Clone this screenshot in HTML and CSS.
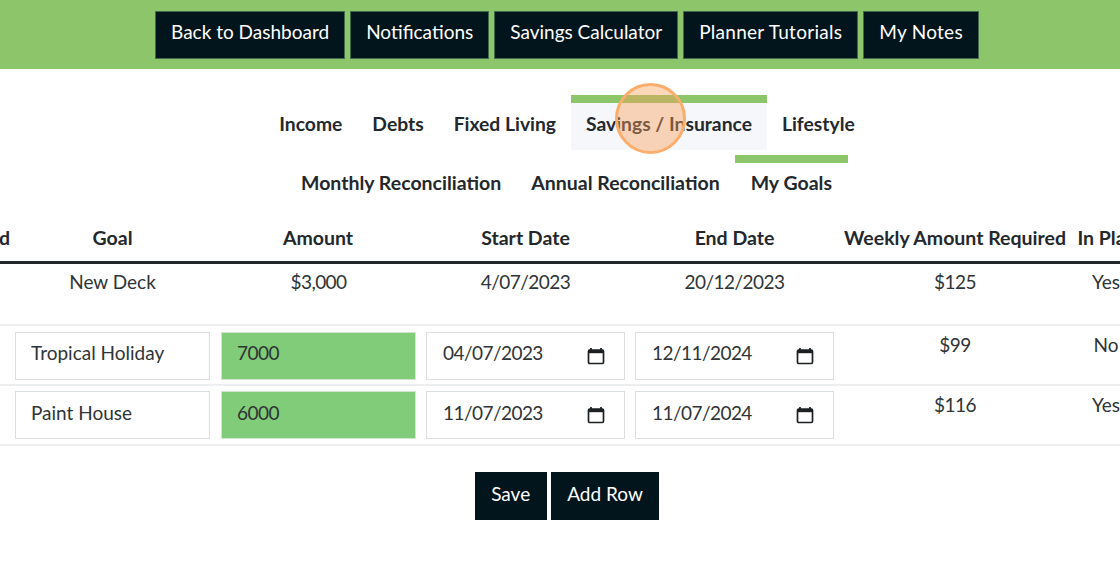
FILE: index.html
```html
<!DOCTYPE html>
<html lang="en">
<head>
<meta charset="utf-8">
<title>My Goals</title>
<link rel="stylesheet" href="styles.css">
</head>
<body>
<div class="page">
  <header class="topbar">
    <a class="btn">Back to Dashboard</a>
    <a class="btn">Notifications</a>
    <a class="btn">Savings Calculator</a>
    <a class="btn wide">Planner Tutorials</a>
    <a class="btn wide">My Notes</a>
  </header>
  <nav class="tabs">
    <div class="tab-row first">
      <a class="tab">Income</a>
      <a class="tab">Debts</a>
      <a class="tab">Fixed Living</a>
      <a class="tab active shaded">Savings / Insurance</a>
      <a class="tab">Lifestyle</a>
    </div>
    <div class="tab-row">
      <a class="tab">Monthly Reconciliation</a>
      <a class="tab">Annual Reconciliation</a>
      <a class="tab active">My Goals</a>
    </div>
  </nav>
  <div class="table-clip">
    <table class="goals">
      <colgroup>
        <col class="c-prev"><col class="c-goal"><col class="c-amount"><col class="c-start"><col class="c-end"><col class="c-weekly"><col class="c-plan">
      </colgroup>
      <thead>
        <tr>
          <th>Saved</th><th>Goal</th><th>Amount</th><th>Start Date</th><th>End Date</th><th>Weekly Amount Required</th><th>In Plan</th>
        </tr>
      </thead>
      <tbody>
        <tr class="static">
          <td></td><td>New Deck</td><td class="num">$3,000</td><td class="num">4/07/2023</td><td class="num">20/12/2023</td><td class="num">$125</td><td>Yes</td>
        </tr>
        <tr class="first-input">
          <td></td>
          <td><input class="field" type="text" value="Tropical Holiday"></td>
          <td><input class="field green num" type="text" value="7000"></td>
          <td><label class="date"><input class="num" type="text" value="04/07/2023"><svg class="cal" viewBox="0 0 18 18"><path d="M4 1v2M14 1v2"/><rect x="1.5" y="3" width="15" height="13.5" rx="1.2"/><path class="fill" d="M1.5 3h15v3.2h-15z"/></svg></label></td>
          <td><label class="date"><input class="num" type="text" value="12/11/2024"><svg class="cal" viewBox="0 0 18 18"><path d="M4 1v2M14 1v2"/><rect x="1.5" y="3" width="15" height="13.5" rx="1.2"/><path class="fill" d="M1.5 3h15v3.2h-15z"/></svg></label></td>
          <td class="num">$99</td>
          <td>No</td>
        </tr>
        <tr class="last-input">
          <td></td>
          <td><input class="field" type="text" value="Paint House"></td>
          <td><input class="field green num" type="text" value="6000"></td>
          <td><label class="date"><input class="num" type="text" value="11/07/2023"><svg class="cal" viewBox="0 0 18 18"><path d="M4 1v2M14 1v2"/><rect x="1.5" y="3" width="15" height="13.5" rx="1.2"/><path class="fill" d="M1.5 3h15v3.2h-15z"/></svg></label></td>
          <td><label class="date"><input class="num" type="text" value="11/07/2024"><svg class="cal" viewBox="0 0 18 18"><path d="M4 1v2M14 1v2"/><rect x="1.5" y="3" width="15" height="13.5" rx="1.2"/><path class="fill" d="M1.5 3h15v3.2h-15z"/></svg></label></td>
          <td class="num">$116</td>
          <td>Yes</td>
        </tr>
      </tbody>
    </table>
  </div>
  <div class="actions">
    <a class="btn">Save</a>
    <a class="btn">Add Row</a>
  </div>
  <div class="click-marker"></div>
</div>
</body>
</html>
```
FILE: styles.css
```css
html, body {
  margin: 0;
  padding: 0;
  height: 100%;
  overflow: hidden;
  background: #fff;
}
.page {
  position: relative;
  width: 1134px;
  font-family: Lato, "Open Sans", sans-serif;
  font-size: 19px;
  line-height: 24px;
  color: #23282d;
  text-rendering: optimizeLegibility;
}
.topbar {
  display: flex;
  justify-content: center;
  gap: 5px;
  height: 69px;
  box-sizing: border-box;
  padding-top: 11px;
  background: #8cc56a;
}
.btn {
  display: block;
  box-sizing: border-box;
  height: 48px;
  padding: 0 15px;
  line-height: 40px;
  color: #fff;
  background: #03151c;
  border: 1px solid #3f6b4c;
  white-space: nowrap;
}
.btn.wide {
  letter-spacing: 0.28px;
}
.tabs {
  display: flex;
  flex-direction: column;
  gap: 5px;
  padding-top: 26px;
}
.tab-row {
  display: flex;
  justify-content: center;
}
.tab {
  display: block;
  height: 47px;
  padding: 0 15px;
  border-top: 8px solid transparent;
  font-size: 19.5px;
  font-weight: 700;
  line-height: 39px;
  color: #23282d;
  white-space: nowrap;
}
.first .tab {
  font-size: 19.3px;
  line-height: 42px;
}
.tab.active {
  padding: 0 16px;
  border-top-color: #8cc56a;
}
.tab.shaded {
  padding: 0 15px;
  background: #f6f7fa;
}
.table-clip {
  margin-top: 4px;
  overflow: hidden;
}
.goals {
  table-layout: fixed;
  border-collapse: collapse;
  width: 1233px;
  margin-left: -90px;
  text-align: center;
}
.c-prev { width: 100px; }
.c-goal { width: 205px; }
.c-amount { width: 206px; }
.c-start { width: 209px; }
.c-end { width: 209px; }
.c-weekly { width: 232px; }
.c-plan { width: 72px; }
.goals th {
  height: 47px;
  padding: 0;
  font-size: 19.5px;
  font-weight: 700;
  border-bottom: 3px solid #23282d;
  vertical-align: middle;
  white-space: nowrap;
}
.goals th:first-child {
  text-align: right;
}
.goals td {
  height: 59px;
  padding: 5px;
  border-bottom: 2px solid #eceeef;
  box-sizing: border-box;
  vertical-align: top;
  color: #2f3437;
}
.goals .static td {
  height: 62px;
  padding-top: 6px;
}
.goals .first-input td {
  padding-top: 6px;
  padding-bottom: 4px;
}
.goals tbody tr:last-child td {
  height: 60px;
}
.goals td:nth-child(3) {
  padding-left: 6px;
}
.goals td:nth-child(6),
.goals td:last-child {
  padding-top: 7px;
  white-space: nowrap;
}
.goals .static td:nth-child(6),
.goals .static td:last-child {
  padding-top: 6px;
}
.goals td:last-child {
  padding-left: 3px;
}
.num {
  letter-spacing: -0.55px;
}
.field,
.date {
  box-sizing: border-box;
  width: 100%;
  height: 48px;
  border: 1px solid #dcdfe0;
  background: #fff;
  font: inherit;
  color: #2f3437;
}
.field {
  display: block;
  padding: 0 15px 6px;
}
.last-input .field {
  padding-bottom: 4px;
}
.field.green {
  background: #80cc78;
  border-color: #d3e6cf;
}
.date {
  display: flex;
  align-items: center;
  padding: 0 19px 0 16px;
}
.date input {
  flex: 1;
  min-width: 0;
  padding: 0 0 4px;
  border: 0;
  background: transparent;
  font: inherit;
  color: inherit;
  letter-spacing: -0.55px;
  outline: none;
}
.first-input .date input {
  padding-bottom: 6px;
}
.cal {
  flex: none;
  width: 18px;
  height: 18px;
  fill: none;
  stroke: #1c2023;
  stroke-width: 1.7;
}
.cal .fill {
  fill: #1c2023;
  stroke: none;
}
.actions {
  display: flex;
  justify-content: center;
  gap: 4px;
  margin-top: 26px;
}
.actions .btn {
  padding: 0 15.5px;
  line-height: 42px;
  border-color: #03151c;
}
.click-marker {
  position: absolute;
  left: 615px;
  top: 83px;
  width: 71px;
  height: 71px;
  box-sizing: border-box;
  border: 3px solid #fbae6c;
  border-radius: 50%;
  background: rgba(248, 160, 90, 0.42);
}
```
